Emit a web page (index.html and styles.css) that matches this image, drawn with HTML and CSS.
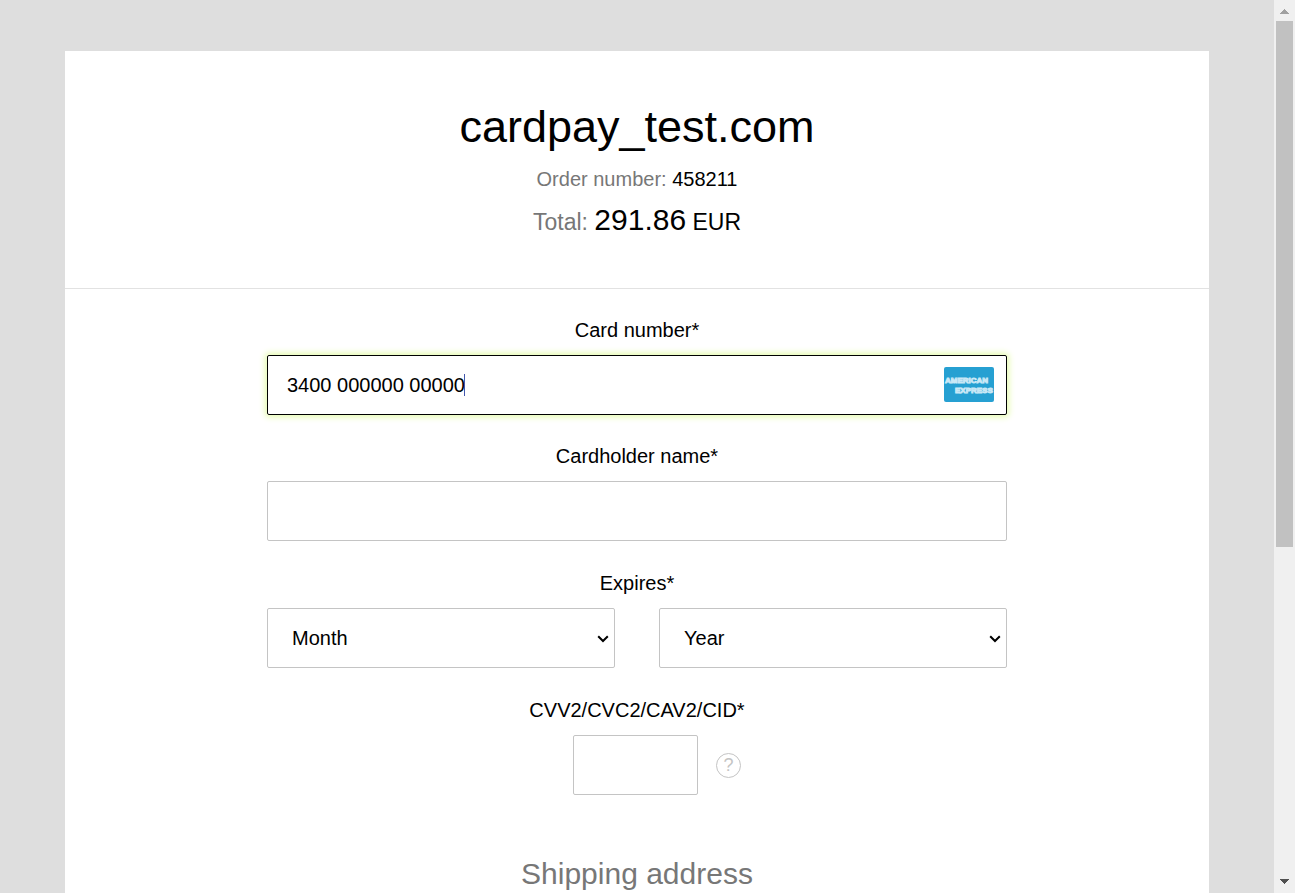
FILE: index.html
```html
<!DOCTYPE html>
<html lang="en">
<head>
<meta charset="utf-8">
<title>cardpay_test.com</title>
<link rel="stylesheet" href="styles.css">
</head>
<body>
<main class="pane">
  <form class="sheet">
    <header class="order">
      <h1 class="order-shop">cardpay_test.com</h1>
      <p class="order-number"><span class="muted">Order number:</span> 458211</p>
      <p class="order-total"><span class="muted">Total:</span> <span class="order-amount">291.86</span> EUR</p>
    </header>
    <div class="fields">
      <div class="group group-number">
        <label class="label" for="number">Card number*</label>
        <div class="control">
          <input class="input input-active" id="number" type="text" value="3400 000000 00000">
          <span class="caret"></span>
          <svg class="brand" viewBox="0 0 50 35" role="img" aria-label="American Express">
            <rect width="50" height="35" rx="2" fill="#26a0d2"/>
            <g class="brand-text">
              <text x="1" y="16">AMERICAN</text>
              <text x="11" y="26">EXPRESS</text>
            </g>
          </svg>
        </div>
      </div>
      <div class="group">
        <label class="label" for="holder">Cardholder name*</label>
        <input class="input" id="holder" type="text">
      </div>
      <div class="group">
        <label class="label" for="month">Expires*</label>
        <div class="expiry">
          <div class="control">
            <select class="input select" id="month"><option>Month</option></select>
            <svg class="chevron" viewBox="0 0 12 8"><path d="M1.2 1.2 6 6l4.800-4.800"/></svg>
          </div>
          <div class="control">
            <select class="input select" id="year" aria-label="Year"><option>Year</option></select>
            <svg class="chevron" viewBox="0 0 12 8"><path d="M1.2 1.2 6 6l4.800-4.800"/></svg>
          </div>
        </div>
      </div>
      <div class="group">
        <label class="label" for="code">CVV2/CVC2/CAV2/CID*</label>
        <div class="code">
          <input class="input input-code" id="code" type="text">
          <button class="help" type="button">?</button>
        </div>
      </div>
    </div>
    <h2 class="section-title">Shipping address</h2>
  </form>
</main>
<div class="scrollbar" aria-hidden="true">
  <svg class="arrow arrow-up" viewBox="0 0 9 5"><path d="M0 5h9v-1H8V3H7V2H6V1H5V0H4v1H3v1H2v1H1v1H0z"/></svg>
  <div class="track"><div class="thumb"></div></div>
  <svg class="arrow" viewBox="0 0 9 5"><path d="M0 0h9v1H8v1H7v1H6v1H5v1H4V4H3V3H2V2H1V1H0z"/></svg>
</div>
</body>
</html>
```
FILE: styles.css
```css
* {
  box-sizing: border-box;
}

body {
  display: flex;
  height: 100vh;
  margin: 0;
  overflow: hidden;
  background: #dedede;
  color: #000;
  font: 20px/24px "Liberation Sans", Arial, sans-serif;
}

h1, h2, p {
  margin: 0;
  font-weight: 400;
}

.pane {
  flex: 1;
  overflow: hidden;
  padding: 51px 65px 0;
}

.sheet {
  min-height: 100%;
  background: #fff;
  text-align: center;
}

.order {
  padding: 50px 20px 48px;
  border-bottom: 1px solid #e2e2e2;
}

.order-shop {
  font-size: 45px;
  line-height: 52px;
}

.order-number {
  margin-top: 14px;
}

.order-total {
  margin-top: 11px;
  font-size: 23px;
  line-height: 36px;
}

.order-amount {
  font-size: 30px;
}

.muted {
  color: #777;
}

.fields {
  display: flex;
  flex-direction: column;
  gap: 30px;
  max-width: 740px;
  margin: 0 auto;
  padding-top: 29px;
}

.group-number {
  margin-bottom: -1px;
}

.label {
  display: block;
  margin-bottom: 13px;
}

.control {
  position: relative;
}

.input {
  display: block;
  width: 100%;
  height: 60px;
  margin: 0;
  padding: 0 19px;
  border: 1px solid #c4c4c4;
  border-radius: 2px;
  outline: none;
  background: #fff;
  color: #000;
  font: inherit;
}

.input-active {
  border-color: #000;
  box-shadow: 0 0 6px 2px #e5fbae;
}

.caret {
  position: absolute;
  top: 19px;
  left: 197px;
  width: 1px;
  height: 22px;
  background: #4357ad;
}

.brand {
  position: absolute;
  top: 12px;
  right: 13px;
  width: 50px;
  height: 35px;
}

.brand-text {
  fill: #7cc4e4;
  stroke: #c9e8f6;
  stroke-width: 1;
  font-size: 8px;
  font-weight: 700;
}

.expiry {
  display: grid;
  grid-template-columns: 1fr 1fr;
  gap: 44px;
}

.select {
  padding: 0 24px;
  appearance: none;
}

.chevron {
  position: absolute;
  top: 27px;
  right: 6px;
  width: 12px;
  height: 8px;
  fill: none;
  stroke: #000;
  stroke-width: 2;
}

.code {
  display: flex;
  align-items: center;
  justify-content: center;
  gap: 18px;
  padding-left: 40px;
}

.input-code {
  width: 125px;
}

.help {
  width: 25px;
  height: 25px;
  padding: 0;
  border: 1px solid #c4c4c4;
  border-radius: 50%;
  background: none;
  color: #c4c4c4;
  font: 18px/22px "Liberation Sans", Arial, sans-serif;
}

.section-title {
  margin-top: 61px;
  color: #777;
  font-size: 30px;
  line-height: 36px;
}

.scrollbar {
  display: flex;
  flex-direction: column;
  align-items: center;
  width: 21px;
  padding: 9px 0;
  background: #f0f0f0;
}

.arrow {
  width: 9px;
  height: 5px;
  fill: #505050;
}

.arrow-up {
  fill: #a0a0a0;
}

.track {
  flex: 1;
  width: 17px;
  padding: 7px 0;
}

.thumb {
  height: 61.8%;
  background: #c1c1c1;
}
```
